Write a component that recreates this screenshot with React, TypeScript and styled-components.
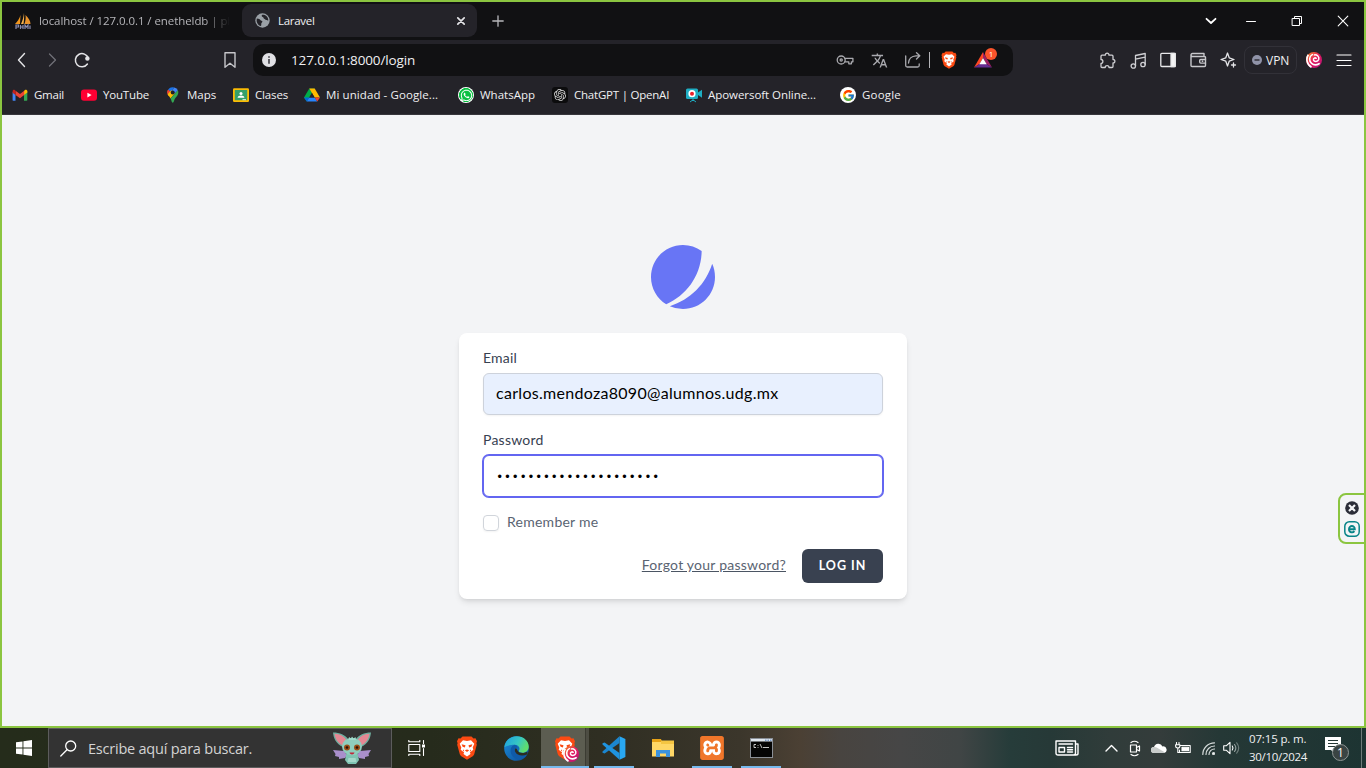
import React from "react";
import styled, { createGlobalStyle, css } from "styled-components";
import { FaWhatsapp } from "react-icons/fa";
import { FcGoogle } from "react-icons/fc";
import { MdTranslate } from "react-icons/md";
import { SiOpenai, SiXampp } from "react-icons/si";

const ui = `"Open Sans", "Noto Sans", sans-serif`;
const page = `Lato, Inter, sans-serif`;

const Global = createGlobalStyle`
  *, *::before, *::after { box-sizing: border-box; }
  html, body, #root { margin: 0; padding: 0; height: 768px; overflow: hidden; }
  body { background: #f3f4f6; font-family: ${ui}; }
  svg { display: block; flex: none; }
`;

const Desktop = styled.div`
  width: 1366px;
  height: 768px;
  display: flex;
  flex-direction: column;
`;

const Frame = styled.div`
  height: 728px;
  border: 2px solid #8bc540;
  display: flex;
  flex-direction: column;
  position: relative;
`;

const Txt = styled.span<{ $size?: number; $ls?: number; $color?: string }>`
  font-size: ${(p) => p.$size ?? 11.5}px;
  letter-spacing: ${(p) => p.$ls ?? 0}px;
  color: ${(p) => p.$color ?? "#f0f0f2"};
  white-space: pre;
`;

const Slot = styled.span<{ $w: number; $start?: boolean }>`
  width: ${(p) => p.$w}px;
  flex: none;
  height: 100%;
  display: flex;
  align-items: center;
  justify-content: ${(p) => (p.$start ? "flex-start" : "center")};
  position: relative;
`;

/* ---------- browser chrome ---------- */

const TabStrip = styled.div`
  height: 38px;
  flex: none;
  background: #111113;
  display: flex;
  align-items: flex-start;
  padding: 2px 0 2px;
`;

const Tab = styled.div<{ $active?: boolean }>`
  height: 33px;
  width: ${(p) => (p.$active ? 235 : 240)}px;
  flex: none;
  padding: 0 10px 0 ${(p) => (p.$active ? 13 : 12)}px;
  display: flex;
  align-items: center;
  gap: ${(p) => (p.$active ? 8 : 7)}px;
  border-radius: 9px;
  background: ${(p) => (p.$active ? "#242329" : "transparent")};
`;

const FadedTitle = styled.div`
  width: 191px;
  line-height: 18px;
  display: flex;
  mask-image: linear-gradient(90deg, #000 165px, transparent 191px);
`;

const Grow = styled.div`
  flex: 1;
`;

const ToolBar = styled.div`
  height: 40px;
  flex: none;
  background: #242329;
  display: flex;
  align-items: center;
  padding-left: 5px;
`;

const AddressBar = styled.div`
  width: 760px;
  height: 32px;
  margin-left: 8px;
  background: #111113;
  border-radius: 10px;
  display: flex;
  align-items: center;
`;

const Divider = styled.span`
  width: 1px;
  height: 16px;
  background: #b4b4b8;
`;

const Badge = styled.span`
  position: absolute;
  left: 17px;
  top: 4px;
  width: 12px;
  height: 12px;
  border-radius: 6px;
  background: #fb542b;
  color: #fff;
  font-size: 8px;
  line-height: 12px;
  text-align: center;
`;

const VpnPill = styled.span`
  width: 53px;
  height: 28px;
  border: 1px solid #323138;
  border-radius: 8px;
  display: flex;
  align-items: center;
  padding-left: 7px;
  gap: 4px;
`;

const BookmarkBar = styled.div`
  height: 35px;
  flex: none;
  background: #242329;
  border-bottom: 1px solid #37363c;
  display: flex;
  align-items: center;
  padding: 0 0 4px 10px;
`;

const Bookmark = styled.div<{ $w: number }>`
  width: ${(p) => p.$w}px;
  flex: none;
  height: 18px;
  display: flex;
  align-items: center;
  gap: 6px;
  ${Txt} {
    padding-bottom: 2px;
  }
`;

const RoundIcon = styled.span<{ $bg: string; $size?: number; $radius?: number; $color?: string }>`
  width: ${(p) => p.$size ?? 16}px;
  height: ${(p) => p.$size ?? 16}px;
  flex: none;
  border-radius: ${(p) => p.$radius ?? 8}px;
  background: ${(p) => p.$bg};
  color: ${(p) => p.$color ?? "#fff"};
  display: flex;
  align-items: center;
  justify-content: center;
`;

/* ---------- login page ---------- */

const Page = styled.main`
  flex: 1;
  background: #f3f4f6;
  display: flex;
  flex-direction: column;
  align-items: center;
  justify-content: center;
  padding-top: 3px;
  font-family: ${page};
`;

const Card = styled.form`
  width: 448px;
  height: 266px;
  margin-top: 24px;
  padding: 16px 24px;
  border-radius: 8px;
  background: #fff;
  box-shadow: 0 4px 6px -1px rgba(0, 0, 0, 0.1), 0 2px 4px -2px rgba(0, 0, 0, 0.1);
`;

const FieldLabel = styled.label`
  display: flex;
  height: 20px;
  line-height: 18px;
`;

const inputBase = css`
  height: 42px;
  margin: 4px 0 16px;
  padding: 0 12px 3px;
  border-radius: 6px;
  display: flex;
  align-items: center;
`;

const EmailField = styled.div`
  ${inputBase}
  background: #e8f0fe;
  border: 1px solid #cdd2db;
  box-shadow: 0 1px 2px rgba(0, 0, 0, 0.05);
`;

const PasswordField = styled.div`
  ${inputBase}
  background: #fff;
  border: 1px solid #6366f1;
  box-shadow: 0 0 0 1px #6366f1;
  padding: 2px 13px 0;
`;

const Dots = styled.span`
  font-family: "Liberation Sans", sans-serif;
  font-size: 12.5px;
  letter-spacing: 3.42px;
  padding-left: 0.5px;
  color: #000;
  line-height: 20px;
`;

const Remember = styled.label`
  display: flex;
  align-items: center;
  gap: 8px;
  height: 20px;
  ${Txt} {
    padding-bottom: 3px;
  }
`;

const CheckBox = styled.span`
  width: 16px;
  height: 16px;
  border: 1px solid #d1d5db;
  border-radius: 4px;
  box-shadow: 0 1px 2px rgba(0, 0, 0, 0.05);
`;

const Actions = styled.div`
  margin-top: 16px;
  display: flex;
  justify-content: flex-end;
  align-items: center;
`;

const ForgotLink = styled.a`
  margin-right: 16px;
  padding-bottom: 3px;
  color: #4b5563;
  text-decoration: underline;
  line-height: 20px;
  display: block;
`;

const LoginButton = styled.button`
  width: 81px;
  height: 34px;
  border: 0;
  border-radius: 6px;
  background: #394150;
  color: #fff;
  font-family: ${page};
  font-weight: 700;
  padding: 0 0 2px;
`;

const SideWidget = styled.div`
  position: absolute;
  right: -2px;
  top: 491px;
  width: 28px;
  height: 51px;
  border: 2px solid #8bc540;
  border-radius: 8px 0 0 8px;
  background: #f3f4f6;
  display: flex;
  flex-direction: column;
  align-items: center;
  gap: 6px;
  padding-top: 6px;
`;

/* ---------- taskbar ---------- */

const TaskBar = styled.footer`
  height: 40px;
  flex: none;
  display: flex;
  align-items: center;
  background: linear-gradient(90deg, #252c1b 0, #262b1c 430px, #2f2e22 600px, #3b362b 740px, #4b4034 800px, #484440 840px, #464646 900px, #404545 960px, #263c3a 1010px, #263937 1050px, #303c3a 1110px, #343c3b 1160px, #253836 1220px, #1d3432 1366px);
`;

const SearchBox = styled.div`
  width: 344px;
  height: 40px;
  border: 1px solid #5c5c5c;
  background: #333;
  display: flex;
  align-items: center;
  padding-left: 11px;
`;

const TaskButton = styled.div<{ $state?: "open" | "active" }>`
  width: 49px;
  height: 40px;
  flex: none;
  display: flex;
  align-items: center;
  justify-content: center;
  padding-right: 1px;
  position: relative;
  background: ${(p) =>
    p.$state === "active" ? "linear-gradient(90deg, #5c5d51 44px, #3c3c33 44px, #3c3c33 45px, #4d4d43 45px 48px, transparent 48px)" : "none"};
  &::after {
    content: "";
    display: ${(p) => (p.$state ? "block" : "none")};
    position: absolute;
    bottom: 0;
    left: ${(p) => (p.$state === "active" ? 0 : 4)}px;
    width: ${(p) => (p.$state === "active" ? 48 : 40)}px;
    height: 2px;
    background: #76b9ed;
  }
`;

const ProfileMark = styled.span`
  position: absolute;
  left: 22px;
  top: 18px;
`;

const Clock = styled.div`
  width: 76px;
  display: flex;
  flex-direction: column;
  align-items: flex-start;
  line-height: 18px;
  padding-bottom: 1px;
`;

const ShowDesktop = styled.span`
  width: 1px;
  height: 40px;
  margin-left: 9px;
  background: #6d7c7a;
`;

/* ---------- icons ---------- */

const Sails = () => (
  <svg width="18" height="18" viewBox="0 0 18 18">
    <path d="M6.500 3 6 12H1C3 10 5.500 7 6.500 3Z" fill="#f0961e" />
    <path d="M10 1c.3 4 0 8-.5 11H7C8.500 9 9.500 5 10 1Z" fill="#f7b14b" />
    <path d="M11.500 3c3 3 5 6 5 9h-6c1-3 1.500-6 1-9Z" fill="#e9932c" />
    <path d="M2 17v-4h2.500v2H2M6.500 13v4M9 13v4M6.500 15H9M11 17v-4l1.500 2 1.500-2v4M16 17v-3.500" stroke="#8a8cb0" strokeWidth="1.200" fill="none" />
  </svg>
);

const Globe = () => (
  <svg width="15" height="15" viewBox="0 0 15 15">
    <circle cx="7.500" cy="7.500" r="7.200" fill="#9aa0a6" />
    <path d="M1.800 5.500c2 .2 3.200.6 3.600 1.600.4 1 1.800.5 2 1.500.1.900-1 1-1.100 2-.1.800.2 1.500-.3 2.400C3.200 12.300 1 9.800 1.800 5.500Z" fill="#242329" />
    <path d="M7 1.800c-.6 1.200-.2 2 .8 2.300.8.300.5 1.400 1.300 1.700.9.300 1.200 1.200 2.200 1.200.9 0 1.300.7 2 .5C13.300 4 11 1.400 7 1.800Z" fill="#242329" />
  </svg>
);

const Stroke = styled.svg.attrs({ fill: "none" })<{ $c?: string; $sw?: number }>`
  stroke: ${(p) => p.$c ?? "#e4e4e7"};
  stroke-width: ${(p) => p.$sw ?? 1.4};
  stroke-linecap: round;
  stroke-linejoin: round;
`;

const Gmail = () => (
  <svg width="16" height="16" viewBox="0 0 16 16">
    <path d="M1 13.800h2.500V7.800L.6 5v8Q.6 13.800 1 13.800Z" fill="#4285f4" />
    <path d="M12 13.800h2.500q.8 0 .8-.8V5L12 7.800Z" fill="#34a853" />
    <path d="M12 3.900v4.200l3.400-2.600V4.500C15.400 3 13.800 2.400 12.700 3.200Z" fill="#fbbc04" />
    <path d="M3.500 8.100V3.700L8 7l4.200-3.200v4.300L8 11.300Z" fill="#ea4335" />
    <path d="M.6 4.500v1.200l3 2.400V3.700l-.7-.5C1.800 2.400.6 3.100.6 4.500Z" fill="#c5221f" />
  </svg>
);

const YouTube = () => (
  <svg width="16" height="16" viewBox="0 0 16 16">
    <rect x="0" y="2.500" width="16" height="11.300" rx="3" fill="#ff0033" />
    <path d="M6.400 5.700v4.800L10.600 8.100Z" fill="#fff" />
  </svg>
);

const Maps = () => (
  <svg width="16" height="16" viewBox="0 0 16 16">
    <path d="M3.300 2.500 6.200 5 4 9.200C3 7.800 2 6.700 2 4.900Q2.200 3.500 3.300 2.500Z" fill="#ea4335" />
    <path d="M3.200 2.500A5.500 5.500 0 0 1 9.400.6L6 4.900Z" fill="#1a73e8" />
    <path d="M9.400.6Q11.800 1.300 12.900 3.300L9.500 7 6 4.900Z" fill="#4285f4" />
    <path d="M2.600 7.300 6.300 3.200 9.700 6.500 5.500 11.500C4.700 9.800 3.400 9 2.600 7.300Z" fill="#fbbc04" />
    <path d="M12.900 3.300c1.200 3.500-.6 5.500-2.300 7.500-1.700 2-1.600 4.900-2.900 4.900-1.100 0-1.200-2.600-2.200-4.200Z" fill="#34a853" />
    <circle cx="7.700" cy="5.400" r="2" fill="#202124" />
  </svg>
);

const Classroom = () => (
  <svg width="16" height="16" viewBox="0 0 16 16">
    <rect y="1.200" width="16" height="13.800" rx="1.200" fill="#fbbc04" />
    <rect x="1.800" y="3" width="12.400" height="10.200" fill="#34a06a" />
    <circle cx="8" cy="6.400" r="1.500" fill="#fff" />
    <path d="M4.600 10.800c0-3 6.800-3 6.800 0Z" fill="#fff" />
    <path d="M9.500 12.200H13v1H9.500Z" fill="#e8f5ee" />
  </svg>
);

const Drive = () => (
  <svg width="16" height="16" viewBox="0 0 16 16">
    <path d="M5.300 1.500h5.400L8 6.200Z" fill="#188038" />
    <path d="M5.300 1.500 0 10.400 2.700 14.600 8 6Z" fill="#00ac47" />
    <path d="M10.700 1.500 16 10.400H10.600L5.300 1.500Z" fill="#ffba00" />
    <path d="M0 10.400h5.400L2.700 14.600Z" fill="#0066da" />
    <path d="M5.400 10.400h5.200l2.700 4.200H2.700Z" fill="#2684fc" />
    <path d="M10.600 10.400H16l-2.700 4.200Z" fill="#ea4335" />
    <path d="M5.400 10.400 8 6.100l2.600 4.300Z" fill="#242329" />
  </svg>
);

const Camera = () => (
  <svg width="16" height="16" viewBox="0 0 16 16">
    <rect x="0" y="1.500" width="12" height="10.500" rx="1.500" fill="#1eaec4" />
    <path d="M12 5.500 16 2.700v8L12 8Z" fill="#1eaec4" />
    <circle cx="6" cy="6.700" r="3.600" fill="#fff" />
    <circle cx="6" cy="6.700" r="2" fill="#e8202a" />
    <path d="M7 12v1.500M4 15l2-1.500h2l2 1.500" stroke="#1eaec4" fill="none" />
  </svg>
);

const BraveLogo = ({ size }: { size: number }) => (
  <svg width={size} height={size} viewBox="0 0 24 24">
    <path d="M7.500.5h9l2 2 2-.2 1.500 3-.6 2 .4 1.500-2.600 9.500q-.4 1.200-1.500 2L12 23.800l-5.700-3.500q-1.100-.8-1.500-2L2.200 8.800l.4-1.500L2 5.300l1.500-3 2 .2Z" fill="#fb4a12" />
    <path d="M8 4.200l4 .8 4-.8 3.300 3.600-1.600 3.600.6 2.300-2.500 2-.9.300L15.500 18 12 20.600 8.500 18l.6-2-.9-.3-2.500-2 .6-2.300L4.700 7.800Z" fill="#fff" />
    <path d="M6.600 8.300l3.900.9-.6 2.200-2.300-.7ZM17.400 8.300l-3.900.9.6 2.200 2.300-.7ZM9.800 14.300l2.200-.8 2.200.8L12 16ZM8.300 13.200l1 2.400-1.500-.8ZM15.700 13.200l-1 2.400 1.500-.8Z" fill="#fb4a12" />
  </svg>
);

const Bat = () => (
  <svg width="18" height="16" viewBox="0 0 18 16">
    <path d="M9 0 0 15.500 5.500 12 9 6Z" fill="#ff4724" />
    <path d="M9 0 18 15.500 12.500 12 9 6Z" fill="#9e1f63" />
    <path d="M0 15.500h18L12.500 12h-7Z" fill="#662d91" />
    <path d="M9 6 12.700 12.200H5.300Z" fill="#fff" />
  </svg>
);

const Swirl = ({ size }: { size: number }) => (
  <svg width={size} height={size} viewBox="0 0 16 16">
    <defs>
      <linearGradient id="swirl" x1="0" y1="0" x2="1" y2="1">
        <stop offset="0" stopColor="#f7941d" />
        <stop offset=".5" stopColor="#e5195f" />
        <stop offset="1" stopColor="#b0157c" />
      </linearGradient>
    </defs>
    <circle cx="8" cy="8" r="8" fill="url(#swirl)" />
    <path d="M10.200 6.300C9 5.300 7.200 6.300 7.500 8c.6 2.200 4.200 2.200 5.200-.4.900-2.800-1.600-5-4.400-4.700" stroke="#fff" strokeWidth="1.500" fill="none" strokeLinecap="round" />
    <path d="M6.300 2.600C3 4.200 2.800 9 5.600 11.400c2 1.700 4.900 1.800 7.500.3" stroke="#fff" strokeWidth="1.600" fill="none" strokeLinecap="round" />
    <path d="M2.300 2.800C-.2 6.500.6 12.500 5.500 15.300" stroke="#fff" strokeWidth="1.700" fill="none" />
  </svg>
);

const Edge = () => (
  <svg width="25" height="25" viewBox="0 0 24 24">
    <defs>
      <linearGradient id="edgeTop" x1="0" y1="0" x2="1" y2=".4">
        <stop offset="0" stopColor="#1b9de2" />
        <stop offset=".6" stopColor="#36c6c4" />
        <stop offset="1" stopColor="#5fdc6d" />
      </linearGradient>
      <linearGradient id="edgeBase" x1="0" y1="0" x2="1" y2="1">
        <stop offset="0" stopColor="#1b8fdc" />
        <stop offset="1" stopColor="#0c4a94" />
      </linearGradient>
    </defs>
    <circle cx="12" cy="12" r="11.800" fill="url(#edgeBase)" />
    <path d="M.3 11C1 4.500 6 .2 12.200.2 19 .2 23.800 5 23.800 10.200c0 3.600-2.700 5.800-6 5.800-2.500 0-4.300-.9-3.400-2.200 1.500-2.200-.5-5.300-4.200-5.300C5 8.500 1 10 .3 11Z" fill="url(#edgeTop)" />
    <path d="M10.200 8.500C7.500 9.500 6 12 6.400 15c.5 4 4 7.300 8.300 7.300 3.300 0 6.300-2.400 7.300-4.600-4 2-9.800 1.200-11.300-2.500-.8-2 .2-3.800 2.200-4.500-.7-1.400-1.700-2-2.700-2.200Z" fill="#0f5aa8" />
    <path d="M22 17.700c-4 2-9.800 1.200-11.300-2.500-.5-1.300-.2-2.600.5-3.400 1.700.5 1.200 2.200 3.200 3.800 2 1.200 5.600.8 7.900-.6.500 1 .3 2-.3 2.700Z" fill="#2c2d20" />
  </svg>
);

const VsCode = () => (
  <svg width="24" height="24" viewBox="0 0 24 24">
    <path d="M17.500.3 23.400 3v18l-5.900 2.700Z" fill="#29a8f2" />
    <path d="M.5 15.600 17.500.3V7L2.600 17.600.5 16.700Z" fill="#1b86cf" />
    <path d="M.5 8.400 17.500 23.700V17L2.600 6.400.5 7.300Z" fill="#1f93df" />
  </svg>
);

const Explorer = () => (
  <svg width="22" height="20" viewBox="0 0 22 20">
    <path d="M0 1h9l1 2.500v3H0Z" fill="#e8a317" />
    <path d="M0 4h22v14.500H0Z" fill="#ffd766" />
    <path d="M9 2.500h13V6H9Z" fill="#f5c542" />
    <path d="M4 19v-7h14v7h-4v-3.500H8V19Z" fill="#3c93dd" />
  </svg>
);

const Terminal = () => (
  <svg width="23" height="20" viewBox="0 0 23 20">
    <rect x=".5" y=".5" width="22" height="19" fill="#050505" stroke="#8a8f96" />
    <rect x="1" y="1" width="21" height="2.500" fill="#dfe6ee" />
    <path d="M15 2.200h1.500M17.500 2.200H19M20 2.200h1.500" stroke="#4a78b5" />
    <path d="M6 6.500H4v3h2M8 7v.8M8 9v.8M10 6l2 4M13 9.500h6" stroke="#d8d8d8" strokeWidth=".9" fill="none" />
  </svg>
);

const Creature = () => (
  <svg width="38" height="32" viewBox="0 0 38 32">
    <path d="M11 19 0 18l2.500 4-.5 2 4 1v2l6-1 2-3ZM27 19l11-1-2.500 4 .5 2-4 1v2l-6-1-2-3Z" fill="#a98fcb" />
    <path d="M10 15C3 12 .5 6 0 .5c7 0 12 2.500 15 6.500ZM28 15c7-3 9.500-9 10-14.500-7 0-12 2.500-15 6.500Z" fill="#6fae9f" />
    <path d="M10.500 14C4.500 11 2 6 1.500 1.700 7 2 11 4 13.500 8ZM27.500 14c6-3 8.500-8 9-12.300-5.500.3-9.500 2.300-12 6.300Z" fill="#e58793" />
    <path d="M13.500 21h11l1.500 7-3 4h-8l-3-4Z" fill="#7fc4b3" />
    <ellipse cx="19" cy="14.500" rx="10" ry="8.700" fill="#8fcdbd" />
    <path d="m15.500 8 .5-3 2 1.500 1-2 1.500 2L22.500 5l.5 3Z" fill="#9fdaca" />
    <circle cx="14" cy="15.500" r="3" fill="#9a4d16" />
    <circle cx="24" cy="15.500" r="3" fill="#9a4d16" />
    <circle cx="14" cy="15.500" r="1.300" fill="#2a1005" />
    <circle cx="24" cy="15.500" r="1.300" fill="#2a1005" />
    <path d="M16.500 20.500h5c-.5 2.600-4.500 2.600-5 0Z" fill="#c2273a" />
    <path d="M15.500 26h7l1 4h-9Z" fill="#a4d8ca" />
  </svg>
);

export default function App() {
  return (
    <>
      <Global />
      <Desktop>
        <Frame>
          <TabStrip>
            <Tab>
              <Sails />
              <FadedTitle>
                <Txt $color="#b6b6ba" $ls={-0.07}>localhost / 127.0.0.1 / enetheldb | ph</Txt>
              </FadedTitle>
            </Tab>
            <Tab $active>
              <Globe />
              <Txt $ls={-0.3}>Laravel</Txt>
              <Grow />
              <Stroke width="12" height="12" viewBox="0 0 12 12" $sw={1.7}>
                <path d="m2.800 2.800 6.400 6.400M9.200 2.800 2.800 9.200" />
              </Stroke>
            </Tab>
            <Slot $w={42}>
              <Stroke width="12" height="12" viewBox="0 0 12 12" $sw={1.3} $c="#b8b8bc">
                <path d="M6 .8v10.400M.8 6h10.400" />
              </Stroke>
            </Slot>
            <Grow />
            <Slot $w={34}>
              <Stroke width="12" height="12" viewBox="0 0 12 12" $sw={1.8} $c="#fff">
                <path d="m1.500 3.800 4.500 4.200 4.500-4.200" />
              </Stroke>
            </Slot>
            <Slot $w={46}>
              <Stroke width="12" height="12" viewBox="0 0 12 12" $sw={1} $c="#fff">
                <path d="M1.500 6.500h9" />
              </Stroke>
            </Slot>
            <Slot $w={46}>
              <Stroke width="12" height="12" viewBox="0 0 12 12" $sw={1} $c="#fff">
                <path d="M1.500 3.500h7v7h-7ZM3.500 3.500v-2h7v7h-2" />
              </Stroke>
            </Slot>
            <Slot $w={1} />
            <Slot $w={43}>
              <Stroke width="12" height="12" viewBox="0 0 12 12" $sw={1.1} $c="#fff">
                <path d="m1.200 1.200 9.600 9.600M10.800 1.200l-9.600 9.600" />
              </Stroke>
            </Slot>
          </TabStrip>

          <ToolBar>
            <Slot $w={30}>
              <Stroke width="16" height="16" viewBox="0 0 16 16" $sw={1.4}>
                <path d="m10.500 1.500-6 6.500 6 6.500" />
              </Stroke>
            </Slot>
            <Slot $w={30}>
              <Stroke width="16" height="16" viewBox="0 0 16 16" $sw={1.3} $c="#717177">
                <path d="m5.500 2 6 6-6 6" />
              </Stroke>
            </Slot>
            <Slot $w={30}>
              <Stroke width="16" height="16" viewBox="0 0 16 16" $sw={1.5}>
                <path d="M14.300 6.300A6.600 6.600 0 1 0 13.400 12" />
                <circle cx="13.400" cy="6.500" r="1.500" fill="#e4e4e7" />
              </Stroke>
            </Slot>
            <Slot $w={118} />
            <Slot $w={30}>
              <Stroke width="16" height="16" viewBox="0 0 16 16" $sw={1.4} $c="#c6c6ca">
                <path d="M3 .8h10v14.400L8 11.300l-5 3.900Z" />
              </Stroke>
            </Slot>
            <AddressBar>
              <Slot $w={32}>
                <svg width="14" height="14" viewBox="0 0 14 14">
                  <circle cx="7" cy="7" r="7" fill="#e0e0e4" />
                  <path d="M6.200 6h1.600v4.800H6.200ZM6.200 3.200h1.600v1.600H6.200Z" fill="#3a3a40" />
                </svg>
              </Slot>
              <Slot $w={6} />
              <Txt $size={13.5} $ls={-0.14}>127.0.0.1:8000/login</Txt>
              <Grow />
              <Slot $w={34}>
                <Stroke width="18" height="16" viewBox="0 0 18 16" $sw={1.3} $c="#a9a9ae">
                  <circle cx="5.200" cy="8" r="4" />
                  <circle cx="5.200" cy="8" r="1.100" />
                  <path d="M8.900 6.300h8v3.500h-1.500v2h-2.600v-2H8.900" />
                </Stroke>
              </Slot>
              <Slot $w={34}>
                <MdTranslate size={17} color="#a9a9ae" />
              </Slot>
              <Slot $w={33}>
                <Stroke width="18" height="16" viewBox="0 0 18 16" $sw={1.3} $c="#a9a9ae">
                  <path d="M1.700 4v9.500q0 1.500 1.500 1.500h10.500q1.500 0 1.500-1.500V12M4.500 11c.2-4 3-7 7.500-7.200h3.600M12.500.8l3.300 3-3.300 3.200" />
                </Stroke>
              </Slot>
              <Divider />
              <Slot $w={38}>
                <BraveLogo size={18} />
              </Slot>
              <Slot $w={30}>
                <Bat />
                <Badge>1</Badge>
              </Slot>
              <Slot $w={15} />
            </AddressBar>
            <Slot $w={79} />
            <Slot $w={31}>
              <Stroke width="17" height="17" viewBox="0 0 17 17" $sw={1.3} $c="#cfcfd3">
                <path d="M3 3.200h3.300c-.3-2.700 4-2.700 3.700 0H13q1 0 1 1v3.300c2.500-.3 2.500 3.700 0 3.500v3.500q0 1-1 1h-3c0-2.500-3.800-2.500-3.800 0H3q-1 0-1-1v-3c2.500 0 2.500-4 0-4V4.200q0-1 1-1Z" />
              </Stroke>
            </Slot>
            <Slot $w={30}>
              <Stroke width="17" height="17" viewBox="0 0 17 17" $sw={1.3} $c="#cfcfd3">
                <circle cx="3.300" cy="14" r="2.200" />
                <circle cx="13" cy="12.500" r="2.200" />
                <path d="M5.500 14V3.500L15.200 1.500v11M5.500 7.200l9.700-2" />
              </Stroke>
            </Slot>
            <Slot $w={30}>
              <Stroke width="16" height="16" viewBox="0 0 16 16" $sw={1.3} $c="#e8e8ea">
                <rect x=".8" y="1.300" width="14.400" height="13.200" rx="1" />
                <path d="M11 1.300h4.200v13.200H11Z" fill="#f4f4f5" />
              </Stroke>
            </Slot>
            <Slot $w={30}>
              <Stroke width="17" height="16" viewBox="0 0 17 16" $sw={1.4} $c="#c8c8cc">
                <path d="M1 3v10.500q0 1 1 1h12.500q1 0 1-1v-8q0-1-1-1H2.500Q1 4.500 1 3t1.500-1.500H14V4" />
                <path d="M15.500 7.500h-4.800q-1 0-1 1v1.600q0 1 1 1h4.800M12.300 9.300h.4" />
              </Stroke>
            </Slot>
            <Slot $w={31}>
              <Stroke width="17" height="16" viewBox="0 0 17 16" $sw={1.3} $c="#e4e4e7">
                <path d="M7.500 1 9.200 5.800 14 7.500 9.200 9.200 7.500 14 5.800 9.200 1 7.500l4.800-1.700Z" />
                <path d="M13.500 11v4M11.500 13h4" />
              </Stroke>
            </Slot>
            <VpnPill>
              <svg width="10" height="10" viewBox="0 0 10 10">
                <circle cx="5" cy="5" r="5" fill="#9093a8" />
                <path d="M2.500 5h5" stroke="#242329" strokeWidth="1.300" />
              </svg>
              <Txt $size={12}>VPN</Txt>
            </VpnPill>
            <Slot $w={34}>
              <Swirl size={16} />
            </Slot>
            <Slot $w={26}>
              <Stroke width="16" height="16" viewBox="0 0 16 16" $sw={1.2} $c="#fff">
                <path d="M1 3h14M1 8.500h14M1 13.500h14" />
              </Stroke>
            </Slot>
          </ToolBar>

          <BookmarkBar>
            <Bookmark $w={69}><Gmail /><Txt $ls={-0.24}>Gmail</Txt></Bookmark>
            <Bookmark $w={84}><YouTube /><Txt $ls={-0.18}>YouTube</Txt></Bookmark>
            <Bookmark $w={68}><Maps /><Txt>Maps</Txt></Bookmark>
            <Bookmark $w={71}><Classroom /><Txt $ls={-0.16}>Clases</Txt></Bookmark>
            <Bookmark $w={154}><Drive /><Txt $ls={0.09}>Mi unidad - Google...</Txt></Bookmark>
            <Bookmark $w={94}>
              <RoundIcon $bg="radial-gradient(circle, #0cc143 0 6.800px, #fff 7.200px)"><FaWhatsapp size={13} /></RoundIcon>
              <Txt>WhatsApp</Txt>
            </Bookmark>
            <Bookmark $w={134}>
              <RoundIcon $bg="#0c0c0d" $radius={3} $color="#d8d8d8"><SiOpenai size={12} /></RoundIcon>
              <Txt $ls={-0.22}>ChatGPT | OpenAI</Txt>
            </Bookmark>
            <Bookmark $w={154}><Camera /><Txt $ls={-0.05}>Apowersoft Online...</Txt></Bookmark>
            <Bookmark $w={80}>
              <RoundIcon $bg="#fff"><FcGoogle size={13} /></RoundIcon>
              <Txt $ls={0.18}>Google</Txt>
            </Bookmark>
          </BookmarkBar>

          <Page>
            <svg width="64" height="64" viewBox="0 0 48 48" fill="#6875f5">
              <path d="M11.395 44.428C4.557 40.198 0 32.632 0 24 0 10.745 10.745 0 24 0a23.891 23.891 0 0113.997 4.502c-.2 17.907-11.097 33.245-26.602 39.926z" />
              <path d="M14.134 45.885A23.914 23.914 0 0024 48c13.255 0 24-10.745 24-24 0-3.516-.756-6.856-2.115-9.866-4.659 15.143-16.608 27.092-31.750 31.751z" />
            </svg>
            <Card>
              <FieldLabel><Txt $size={14} $color="#374151" $ls={0.2}>Email</Txt></FieldLabel>
              <EmailField><Txt $size={16} $color="#000" $ls={0.297}>carlos.mendoza8090@alumnos.udg.mx</Txt></EmailField>
              <FieldLabel><Txt $size={14} $color="#374151" $ls={0.23}>Password</Txt></FieldLabel>
              <PasswordField><Dots>•••••••••••••••••••••</Dots></PasswordField>
              <Remember>
                <CheckBox />
                <Txt $size={14} $color="#5a6472" $ls={0.25}>Remember me</Txt>
              </Remember>
              <Actions>
                <ForgotLink><Txt $size={14} $color="#5a6472" $ls={0.235}>Forgot your password?</Txt></ForgotLink>
                <LoginButton type="button"><Txt $size={12.5} $color="#fff" $ls={1}>LOG IN</Txt></LoginButton>
              </Actions>
            </Card>
          </Page>

          <SideWidget>
            <svg width="14" height="14" viewBox="0 0 14 14">
              <circle cx="7" cy="7" r="6.800" fill="#2b2d38" />
              <path d="m4 4 6 6M10 4l-6 6" stroke="#f3f4f6" strokeWidth="2.200" />
            </svg>
            <svg width="16" height="16" viewBox="0 0 16 16" fill="none" stroke="#088488">
              <rect x=".8" y=".8" width="14.400" height="14.400" rx="4.500" strokeWidth="1.500" />
              <path d="M5.200 8.200h5.600c0-4.200-5.800-4.200-5.800 0 0 3.600 4 3.800 5.400 2" strokeWidth="1.900" />
            </svg>
          </SideWidget>
        </Frame>

        <TaskBar>
          <Slot $w={48}>
            <svg width="16" height="16" viewBox="0 0 16 16" fill="#fff">
              <path d="M0 2.300 6.500 1.400V7.500H0ZM7.400 1.300 16 0v7.500H7.400ZM0 8.500h6.500v6.100L0 13.700ZM7.400 8.500H16V16L7.400 14.700Z" />
            </svg>
          </Slot>
          <SearchBox>
            <Slot $w={28} $start>
              <Stroke width="17" height="17" viewBox="0 0 17 17" $sw={1.3} $c="#fff">
                <circle cx="10.700" cy="6" r="5" />
                <path d="M7 9.700.8 16" />
              </Stroke>
            </Slot>
            <Txt $size={14.5} $color="#d4d4d4" $ls={-0.22}>Escribe aquí para buscar.</Txt>
            <Grow />
            <Slot $w={58} $start><Creature /></Slot>
          </SearchBox>
          <Slot $w={48}>
            <Stroke width="17" height="16" viewBox="0 0 17 16" $sw={1.1} $c="#fff">
              <path d="M.8 4.500h11v7H.8ZM.8 0v1.800h11V0M.8 16v-1.800h11V16M15.500.5v3M15.500 8.500V15.500" />
              <path d="M14 4.500h3v3h-3Z" fill="#fff" stroke="none" />
            </Stroke>
          </Slot>
          <Slot $w={3} />
          <TaskButton><BraveLogo size={24} /></TaskButton>
          <TaskButton><Edge /></TaskButton>
          <TaskButton $state="active">
            <BraveLogo size={24} />
            <ProfileMark><Swirl size={16} /></ProfileMark>
          </TaskButton>
          <TaskButton $state="open"><VsCode /></TaskButton>
          <TaskButton><Explorer /></TaskButton>
          <TaskButton $state="open">
            <RoundIcon $bg="#fff" $size={22} $radius={4} $color="#f0762a"><SiXampp size={24} /></RoundIcon>
          </TaskButton>
          <TaskButton $state="open"><Terminal /></TaskButton>
          <Grow />
          <Slot $w={50} $start>
            <Stroke width="24" height="16" viewBox="0 0 24 16" $sw={1.4} $c="#fff">
              <path d="M1 1h19.500v12q0 2-2 2H3q-2 0-2-2ZM20.500 4H23v9.500q0 1.500-2 1.500h-2.500M4 4h13.500" />
              <path d="M4 7.500h5.500V12H4ZM12.500 7.500h5M12.500 9.800h5M12.500 12h5" />
            </Stroke>
          </Slot>
          <Slot $w={24} $start>
            <Stroke width="13" height="8" viewBox="0 0 13 8" $sw={1.4} $c="#fff"><path d="m1 7 5.500-5.500L12 7" /></Stroke>
          </Slot>
          <Slot $w={22} $start>
            <Stroke width="12" height="17" viewBox="0 0 12 17" $sw={1.2} $c="#fff">
              <path d="M1.500 5h6v7h-6ZM7.500 7.500l3-1.500v5l-3-1.500M2 2.500q3.500-2.500 7 0M2 14.500q3.500 2.500 7 0" />
            </Stroke>
          </Slot>
          <Slot $w={24} $start>
            <svg width="16" height="10" viewBox="0 0 16 10">
              <path d="M3 10a3 3 0 0 1 0-6A4.500 4.500 0 0 1 11.500 3.500 3.300 3.300 0 0 1 13 10Z" fill="#fff" />
              <path d="M3 10a3 3 0 0 1 0-6q1.500-.3 2.700.5L14 9.500l-1 .5Z" fill="#c9cccb" />
            </svg>
          </Slot>
          <Slot $w={27} $start>
            <Stroke width="16" height="12" viewBox="0 0 16 12" $sw={1.1} $c="#fff">
              <path d="M5.500 3.500H15.200V10.500H4.500V8M1.500.5V2.500M4 .5V2.500M.6 2.800h4.300V4q0 2-2.100 2T.6 4ZM2.800 6v4.500h2" />
              <path d="M7 5.300h6.500v3.500H7Z" fill="#fff" />
            </Stroke>
          </Slot>
          <Slot $w={21} $start>
            <Stroke width="13" height="13" viewBox="0 0 13 13" $sw={1.2} $c="#d5dbda">
              <path d="M.8 12.500A11.700 11.700 0 0 1 12.500.8M4 12.500A8.500 8.500 0 0 1 12.500 4M7 12.500A5.500 5.500 0 0 1 12.500 7" />
              <circle cx="11.500" cy="11.500" r="1" fill="#fff" />
            </Stroke>
          </Slot>
          <Slot $w={26} $start>
            <Stroke width="17" height="14" viewBox="0 0 17 14" $sw={1.1} $c="#fff">
              <path d="M.7 4.800h2.500L7 1.300v11.400L3.200 9.200H.7ZM9.300 5q1.400 2 0 4" />
              <path d="M11.500 3.500q2.700 3.500 0 7" stroke="#9aa6a4" />
              <path d="M13.700 1.800q4 5.200 0 10.400" stroke="#6d7c7a" />
            </Stroke>
          </Slot>
          <Clock>
            <Txt $ls={-0.15}>07:15 p. m.</Txt>
            <Txt $ls={-0.3}>30/10/2024</Txt>
          </Clock>
          <Slot $w={27} $start>
            <svg width="26" height="25" viewBox="0 0 26 25">
              <path d="M0 1h16v13H9v3l-3-3H0Z" fill="#fff" />
              <path d="M3 4.500h10M3 7.500h10M3 10.500h7" stroke="#253836" />
              <circle cx="15.500" cy="16.500" r="8" fill="#3a4443" stroke="#8d9594" />
              <text x="15.500" y="20.500" fontSize="12" fill="#fff" textAnchor="middle">1</text>
            </svg>
          </Slot>
          <ShowDesktop />
          <Slot $w={4} />
        </TaskBar>
      </Desktop>
    </>
  );
}
